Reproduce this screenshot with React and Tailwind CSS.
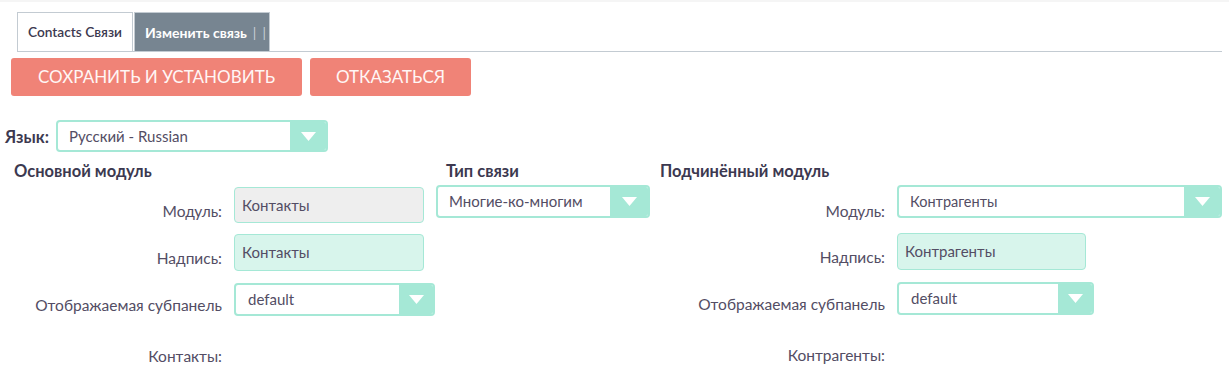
import React from 'react';

const label = 'text-[15.5px] text-[#534d64] text-right whitespace-nowrap';

function Select({ value, className = '', arrow = 'w-[36px]', text = 'text-[15px]', pad = 'pl-[11px]' }) {
  return (
    <div className={`flex rounded-[4px] border-2 border-[#a5e8d6] bg-white overflow-hidden ${className}`}>
      <div className={`flex-1 flex items-center ${pad} ${text} text-[#534d64] truncate`}>{value}</div>
      <div className={`${arrow} bg-[#a5e8d6] flex items-center justify-center`}>
        <svg width="15" height="9" viewBox="0 0 15 9"><path d="M0 0h15L7.5 9z" fill="#fff" /></svg>
      </div>
    </div>
  );
}

function Field({ value, className = '' }) {
  return (
    <div className={`flex items-center rounded-[4px] border border-[#a5e8d6] px-[7px] text-[15px] text-[#534d64] ${className}`}>
      {value}
    </div>
  );
}

export default function App() {
  return (
    <div className="w-[1229px] h-[380px] bg-white overflow-hidden font-['Lato','Liberation_Sans',sans-serif] text-[#534d64]">
      <div className="h-[2px] bg-[#f5f5f5]" />

      {/* tabs */}
      <div className="ml-[17px] mr-[7px] mt-[10px] flex border-b border-[#c3cbd2]">
        <div className="h-[39px] px-[10px] flex items-center border border-b-0 border-[#c3cbd2] bg-white text-[13.7px] font-semibold text-[#3c3950]">
          Contacts Связи
        </div>
        <div className="ml-[1px] h-[39px] pl-[10px] pr-[3px] flex items-center gap-[6px] border border-b-0 border-[#c3cbd2] bg-[#778591] text-[14px] font-bold text-white">
          <span>Изменить связь</span>
          <span className="font-normal text-[#c8cfd6]">|</span>
          <span className="font-normal text-[#c8cfd6]">|</span>
        </div>
      </div>

      {/* buttons */}
      <div className="flex gap-[8px] ml-[11px] mt-[6px]">
        <button className="h-[38px] w-[291px] rounded-[3px] bg-[#f08377] text-[#fff6f5] text-[17px]">СОХРАНИТЬ И УСТАНОВИТЬ</button>
        <button className="h-[38px] w-[161px] rounded-[3px] bg-[#f08377] text-[#fff6f5] text-[17px]">ОТКАЗАТЬСЯ</button>
      </div>

      {/* language */}
      <div className="flex items-center mt-[24px] ml-[5px]">
        <span className="w-[45px] text-[16.5px] font-bold text-[#3c3950] mt-[2px]">Язык:</span>
        <Select value="Русский - Russian" className="ml-[6px] w-[272px] h-[32px]" text="text-[15px]" pad="pl-[11px]" />
      </div>

      {/* form */}
      <div className="flex mt-[8px]">
        <div className="w-[436px]">
          <div className="pl-[14px] h-[22px] text-[16.5px] leading-[22px] font-bold text-[#3c3950]">Основной модуль</div>
          <div className="flex mt-[5px] h-[37px]">
            <div className={`${label} w-[222px] pt-[13px]`}>Модуль:</div>
            <Field value="Контакты" className="ml-[12px] w-[190px] h-[36px] bg-[#eeeeee]" />
          </div>
          <div className="flex mt-[10px] h-[37px]">
            <div className={`${label} w-[222px] pt-[13px]`}>Надпись:</div>
            <Field value="Контакты" className="ml-[12px] w-[190px] h-[37px] bg-[#d8f5ec]" />
          </div>
          <div className="flex mt-[12px] h-[33px]">
            <div className={`${label} w-[222px] pt-[11px]`}>Отображаемая субпанель</div>
            <Select value="default" className="ml-[12px] w-[201px] h-[33px]" arrow="w-[34px]" pad="pl-[12px]" />
          </div>
          <div className={`${label} w-[222px] mt-[29px]`}>Контакты:</div>
        </div>

        <div className="w-[224px]">
          <div className="pl-[10px] h-[22px] text-[16.5px] leading-[22px] font-bold text-[#3c3950]">Тип связи</div>
          <Select value="Многие-ко-многим" className="mt-[3px] w-[214px] h-[33px]" arrow="w-[38px]" />
        </div>

        <div className="flex-1">
          <div className="h-[22px] text-[16.5px] leading-[22px] font-bold text-[#3c3950]">Подчинённый модуль</div>
          <div className="flex mt-[3px] h-[38px]">
            <div className={`${label} w-[225px] pt-[15px]`}>Модуль:</div>
            <Select value="Контрагенты" className="ml-[12px] w-[325px] h-[33px]" arrow="w-[36px]" text="text-[14.5px]" />
          </div>
          <div className="flex mt-[10px] h-[37px]">
            <div className={`${label} w-[225px] pt-[13px]`}>Надпись:</div>
            <Field value="Контрагенты" className="ml-[12px] w-[189px] h-[37px] bg-[#d8f5ec]" />
          </div>
          <div className="flex mt-[12px] h-[33px]">
            <div className={`${label} w-[225px] pt-[11px]`}>Отображаемая субпанель</div>
            <Select value="default" className="ml-[12px] w-[197px] h-[33px]" arrow="w-[34px]" pad="pl-[12px]" />
          </div>
          <div className={`${label} w-[225px] mt-[29px]`}>Контрагенты:</div>
        </div>
      </div>
    </div>
  );
}
